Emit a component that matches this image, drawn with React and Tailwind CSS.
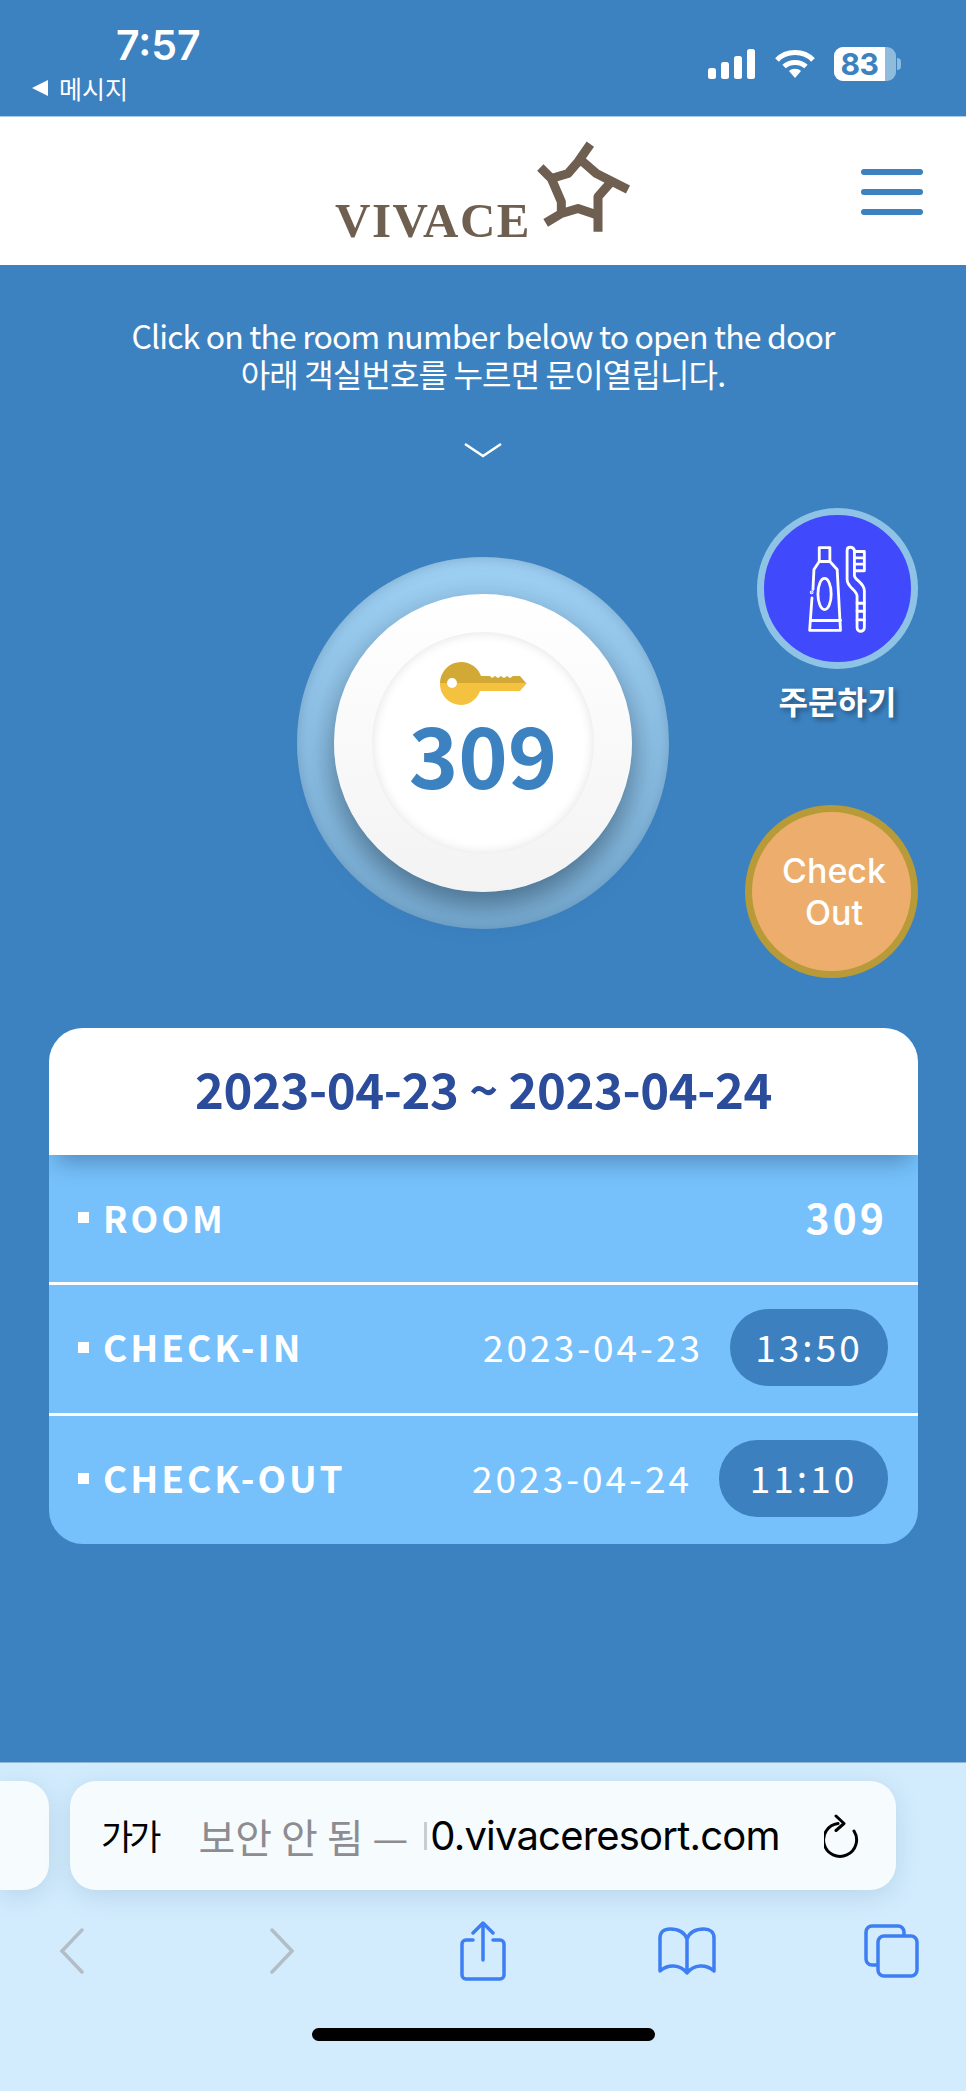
import React from "react";

const rows = [
  { label: "CHECK-IN", date: "2023-04-23", time: "13:50", pill: "w-[158px]" },
  { label: "CHECK-OUT", date: "2023-04-24", time: "11:10", pill: "w-[169px]" },
];

const StarLogo = () => (
  <svg width="100" height="97" viewBox="640 30 300 290" fill="none" stroke="#6f5f50" strokeWidth="27" strokeLinejoin="round" className="blur-[0.4px]">
    <polyline points="812,42 775,95 745,130 695,145" />
    <polyline points="662,112 695,145 725,215 725,250" />
    <polyline points="678,278 725,250 775,235 835,255" />
    <polyline points="835,305 835,200 870,160" />
    <polyline points="925,178 830,130 790,95 775,95" />
  </svg>
);

const ToothIcon = () => (
  <svg width="63" height="90" viewBox="260 160 190 270" fill="none" stroke="white" strokeWidth="8.5" strokeLinejoin="round" strokeLinecap="round">
    <path d="M300 170h32v42h-32z" />
    <path d="M300 212l-16 24-3 60M278 322l-7 98h93l-10-184-22-24" />
    <path d="M274 390h90" />
    <ellipse cx="316" cy="310" rx="20" ry="47" />
    <circle cx="277" cy="305" r="1.5" fill="white" />
    <path d="M384 178c0-12 18-12 22 0v76c0 14 30 22 30 46v112c0 14-22 14-22 0v-96c0-18-30-26-30-50z" />
    <path d="M406 182h30v58h-30M406 201h30M406 220h30M414 338h22M414 362h22M414 388h22" />
  </svg>
);

const KeyIcon = () => (
  <svg width="87" height="43" viewBox="0 0 87 43">
    <path d="M21 0a21 21 0 0 1 20 14h39l6 7H0A21 21 0 0 1 21 0z" fill="#d3a935" />
    <path d="M0 21h87l-7 8H40a21 21 0 0 1-19 14A21 21 0 0 1 0 21z" fill="#f4c23e" />
    <path d="M50 14l2 2 3-2 3 2 3-2 3 2 3-2 3 2 3-2v-1H50z" fill="white" />
    <circle cx="12" cy="21" r="5" fill="white" />
  </svg>
);

const App = () => {
  return (
    <div className="flex min-h-screen flex-col bg-[#3c82c1] font-['Noto_Sans_CJK_KR',sans-serif] text-white">
      {/* status bar */}
      <div className="flex h-[117px] justify-between border-b border-b-[#a9cbe6] pl-[32px] pr-[65px]">
        <div>
          <div className="ml-[84px] mt-[21px] font-['Inter',sans-serif] text-[41px] font-semibold leading-[48px]">7:57</div>
          <div className="mt-[4px] flex items-center gap-[11px] text-[25px] leading-[30px]">
            <span className="h-0 w-0 border-y-[8px] border-r-[16px] border-y-transparent border-r-white"></span>
            메시지
          </div>
        </div>
        <div className="mt-[47px] flex h-[34px] items-center">
          <svg width="48" height="30" viewBox="0 0 48 30" fill="white">
            <rect x="0" y="19" width="8" height="11" rx="2.5" />
            <rect x="13" y="13" width="8" height="17" rx="2.5" />
            <rect x="26" y="7" width="8" height="23" rx="2.5" />
            <rect x="39" y="0" width="8" height="30" rx="2.5" />
          </svg>
          <svg width="42" height="30" viewBox="0 0 42 30" fill="none" stroke="white" strokeWidth="5" className="ml-[18px]">
            <path d="M3 11C12 1 30 1 39 11" />
            <path d="M10 17.5C16 12 26 12 32 17.5" />
            <path d="M21 29l-6-7c3-3 9-3 12 0z" fill="white" stroke="none" />
          </svg>
          <div className="ml-[18px] flex h-[34px] w-[62px] items-center overflow-hidden rounded-[9px] bg-[#8fbbdd]">
            <div className="flex h-full w-[51px] items-center justify-center bg-white font-['Inter',sans-serif] text-[30px] font-bold tracking-[-0.5px] text-[#3c82c1]">83</div>
          </div>
          <div className="ml-[1px] h-[12px] w-[4px] rounded-r-full bg-[#8fbbdd]"></div>
        </div>
      </div>

      {/* header */}
      <div className="flex h-[148px] items-start bg-white">
        <div className="ml-[335px] mt-[23px] flex items-end">
          <span className="mb-[-3px] font-['Liberation_Serif',serif] text-[49px] font-bold leading-[50px] tracking-[1.5px] text-[#6f5f50]">VIVACE</span>
          <div className="mb-[6px] ml-[2px]"><StarLogo /></div>
        </div>
        <div className="ml-auto mr-[43px] mt-[52px] flex w-[62px] flex-col gap-[14px]">
          <div className="h-[6px] rounded-full bg-[#3c82c1]"></div>
          <div className="h-[6px] rounded-full bg-[#3c82c1]"></div>
          <div className="h-[6px] rounded-full bg-[#3c82c1]"></div>
        </div>
      </div>

      {/* main */}
      <div className="flex-1">
        <div className="mt-[51px] text-center text-[32px] leading-[38px] tracking-[-0.85px]">
          <p>Click on the room number below to open the door</p>
          <p>아래 객실번호를 누르면 문이열립니다.</p>
        </div>
        <svg width="38" height="16" viewBox="0 0 38 16" fill="none" stroke="white" strokeWidth="2.5" className="mx-auto mt-[50px]">
          <path d="M1 2l18 12L37 2" />
        </svg>

        <div className="mt-[50px] grid h-[470px] grid-cols-[297px_372px_297px] items-center">
          <div></div>
          <div className="flex h-[372px] w-[372px] items-center justify-center rounded-full bg-gradient-to-b from-[#9fd1f4] to-[#7db2d9] shadow-[inset_0_0_14px_rgba(60,90,120,0.35)]">
            <div className="flex h-[298px] w-[298px] items-center justify-center rounded-full bg-gradient-to-b from-white to-[#f3f3f3] shadow-[0_14px_32px_rgba(20,40,60,0.5)]">
              <div className="flex h-[222px] w-[222px] flex-col items-center rounded-full bg-white shadow-[inset_0_0_12px_rgba(0,0,0,0.12)]">
                <div className="mt-[30px] h-[43px]"><KeyIcon /></div>
                <div className="mt-[-2px] text-[84px] font-bold leading-[100px] text-[#3c82c1]">309</div>
              </div>
            </div>
          </div>
          <div className="flex h-full flex-col items-end justify-between pr-[48px]">
            <div className="flex w-[161px] flex-col items-center">
              <div className="flex h-[161px] w-[161px] items-center justify-center rounded-full border-[7px] border-[#8fc3e6] bg-[#4049fb]">
                <ToothIcon />
              </div>
              <div className="mt-[9px] whitespace-nowrap text-[32px] font-bold leading-[44px] [text-shadow:3px_3px_5px_rgba(0,0,0,0.35)]">주문하기</div>
            </div>
            <div className="flex h-[173px] w-[173px] items-center justify-center rounded-full border-[7px] border-[#b89a38] bg-[#edae6d] pl-[5px] text-center font-['Inter',sans-serif] text-[34px] font-medium leading-[42px]">
              <div>Check<br />Out</div>
            </div>
          </div>
        </div>

        {/* stay info */}
        <div className="ml-[49px] mt-[50px] w-[869px] overflow-hidden rounded-[34px] bg-[#76c1fb]">
          <div className="relative flex h-[127px] items-center justify-center bg-white pb-[8px] text-[49px] font-bold tracking-[-0.4px] text-[#2b4c9b] shadow-[0_14px_22px_-8px_rgba(20,50,90,0.4)]">
            2023-04-23 ~ 2023-04-24
          </div>
          <div className="flex h-[127px] items-center pb-[3px] pl-[29px] pr-[31px] text-[36px] font-bold tracking-[3px]">
            <span className="h-[11px] w-[11px] bg-white"></span>
            <span className="ml-[14px]">ROOM</span>
            <span className="ml-auto text-[41px]">309</span>
          </div>
          {rows.map((row) => (
            <div key={row.label} className="flex h-[131px] items-center border-t-[3px] border-white pb-[4px] pl-[29px] pr-[30px] text-[37px] tracking-[3px]">
              <span className="h-[11px] w-[11px] bg-white"></span>
              <span className="ml-[14px] font-bold">{row.label}</span>
              <span className="ml-auto font-normal">{row.date}</span>
              <span className={`ml-[27px] flex h-[77px] items-center justify-center rounded-[38px] bg-[#3c80bf] ${row.pill}`}>{row.time}</span>
            </div>
          ))}
        </div>
      </div>

      {/* safari toolbar */}
      <div className="h-[329px] border-t border-t-[#8fb8d8] bg-[#d2ecfd]">
        <div className="mt-[18px] flex h-[109px] gap-[21px]">
          <div className="w-[49px] rounded-r-[26px] bg-[#f6fbfe] shadow-[0_6px_24px_rgba(70,110,150,0.18)]"></div>
          <div className="flex w-[826px] items-center rounded-[26px] bg-[#f6fbfe] pl-[31px] text-[40px] text-black shadow-[0_6px_24px_rgba(70,110,150,0.18)]">
            <span className="text-[35px] tracking-[-4px]">가가</span>
            <span className="ml-[41px] whitespace-pre text-[#8c8c91]">보안 안 됨 —</span>
            <span className="ml-[16px] mr-[3px] h-[28px] w-[3px] bg-[#c9ccd0]"></span>
            <span className="font-['Inter',sans-serif] text-[40px] tracking-[-0.8px]">0.vivaceresort.com</span>
            <svg width="36" height="44" viewBox="0 0 36 44" fill="none" stroke="black" strokeWidth="3" strokeLinecap="round" strokeLinejoin="round" className="ml-auto mr-[36px]">
              <path d="M14 9.5A16.5 16.5 0 1 0 30 17" />
              <path d="M12 2l8 7.5-8 7" />
            </svg>
          </div>
        </div>
        <div className="mt-[31px] flex h-[60px] items-center pl-[59px]">
          <svg width="25" height="46" viewBox="0 0 25 46" fill="none" stroke="#b2bdc5" strokeWidth="3.5" strokeLinecap="round">
            <path d="M23 2L3 23l20 21" />
          </svg>
          <svg width="24" height="46" viewBox="0 0 24 46" fill="none" stroke="#b2bdc5" strokeWidth="3.5" strokeLinecap="round" className="ml-[186px]">
            <path d="M2 2l20 21L2 44" />
          </svg>
          <svg width="46" height="60" viewBox="0 0 46 60" fill="none" stroke="#3d7ef2" strokeWidth="3.5" strokeLinecap="round" strokeLinejoin="round" className="ml-[166px]">
            <path d="M13 19H6a4 4 0 0 0-4 4v31a4 4 0 0 0 4 4h34a4 4 0 0 0 4-4V23a4 4 0 0 0-4-4h-7" />
            <path d="M23 39V2M13 12L23 2l10 10" />
          </svg>
          <svg width="58" height="48" viewBox="0 0 58 48" fill="none" stroke="#3d7ef2" strokeWidth="3.5" strokeLinecap="round" strokeLinejoin="round" className="ml-[152px]">
            <path d="M29 46V12C26 4 18 2 12 2 6 2 2 5 2 11v33c8-7 20-7 27 2 7-9 19-9 27-2V11c0-6-4-9-10-9-6 0-14 2-17 10" />
          </svg>
          <svg width="55" height="54" viewBox="0 0 55 54" fill="none" stroke="#3d7ef2" strokeWidth="3.5" className="ml-[148px]">
            <path d="M14 41H8a6 6 0 0 1-6-6V8a6 6 0 0 1 6-6h26a6 6 0 0 1 6 6v4" />
            <rect x="14" y="12" width="39" height="40" rx="6" />
          </svg>
        </div>
        <div className="mx-auto mt-[47px] h-[13px] w-[343px] rounded-full bg-black"></div>
      </div>
    </div>
  );
};

export default App;
